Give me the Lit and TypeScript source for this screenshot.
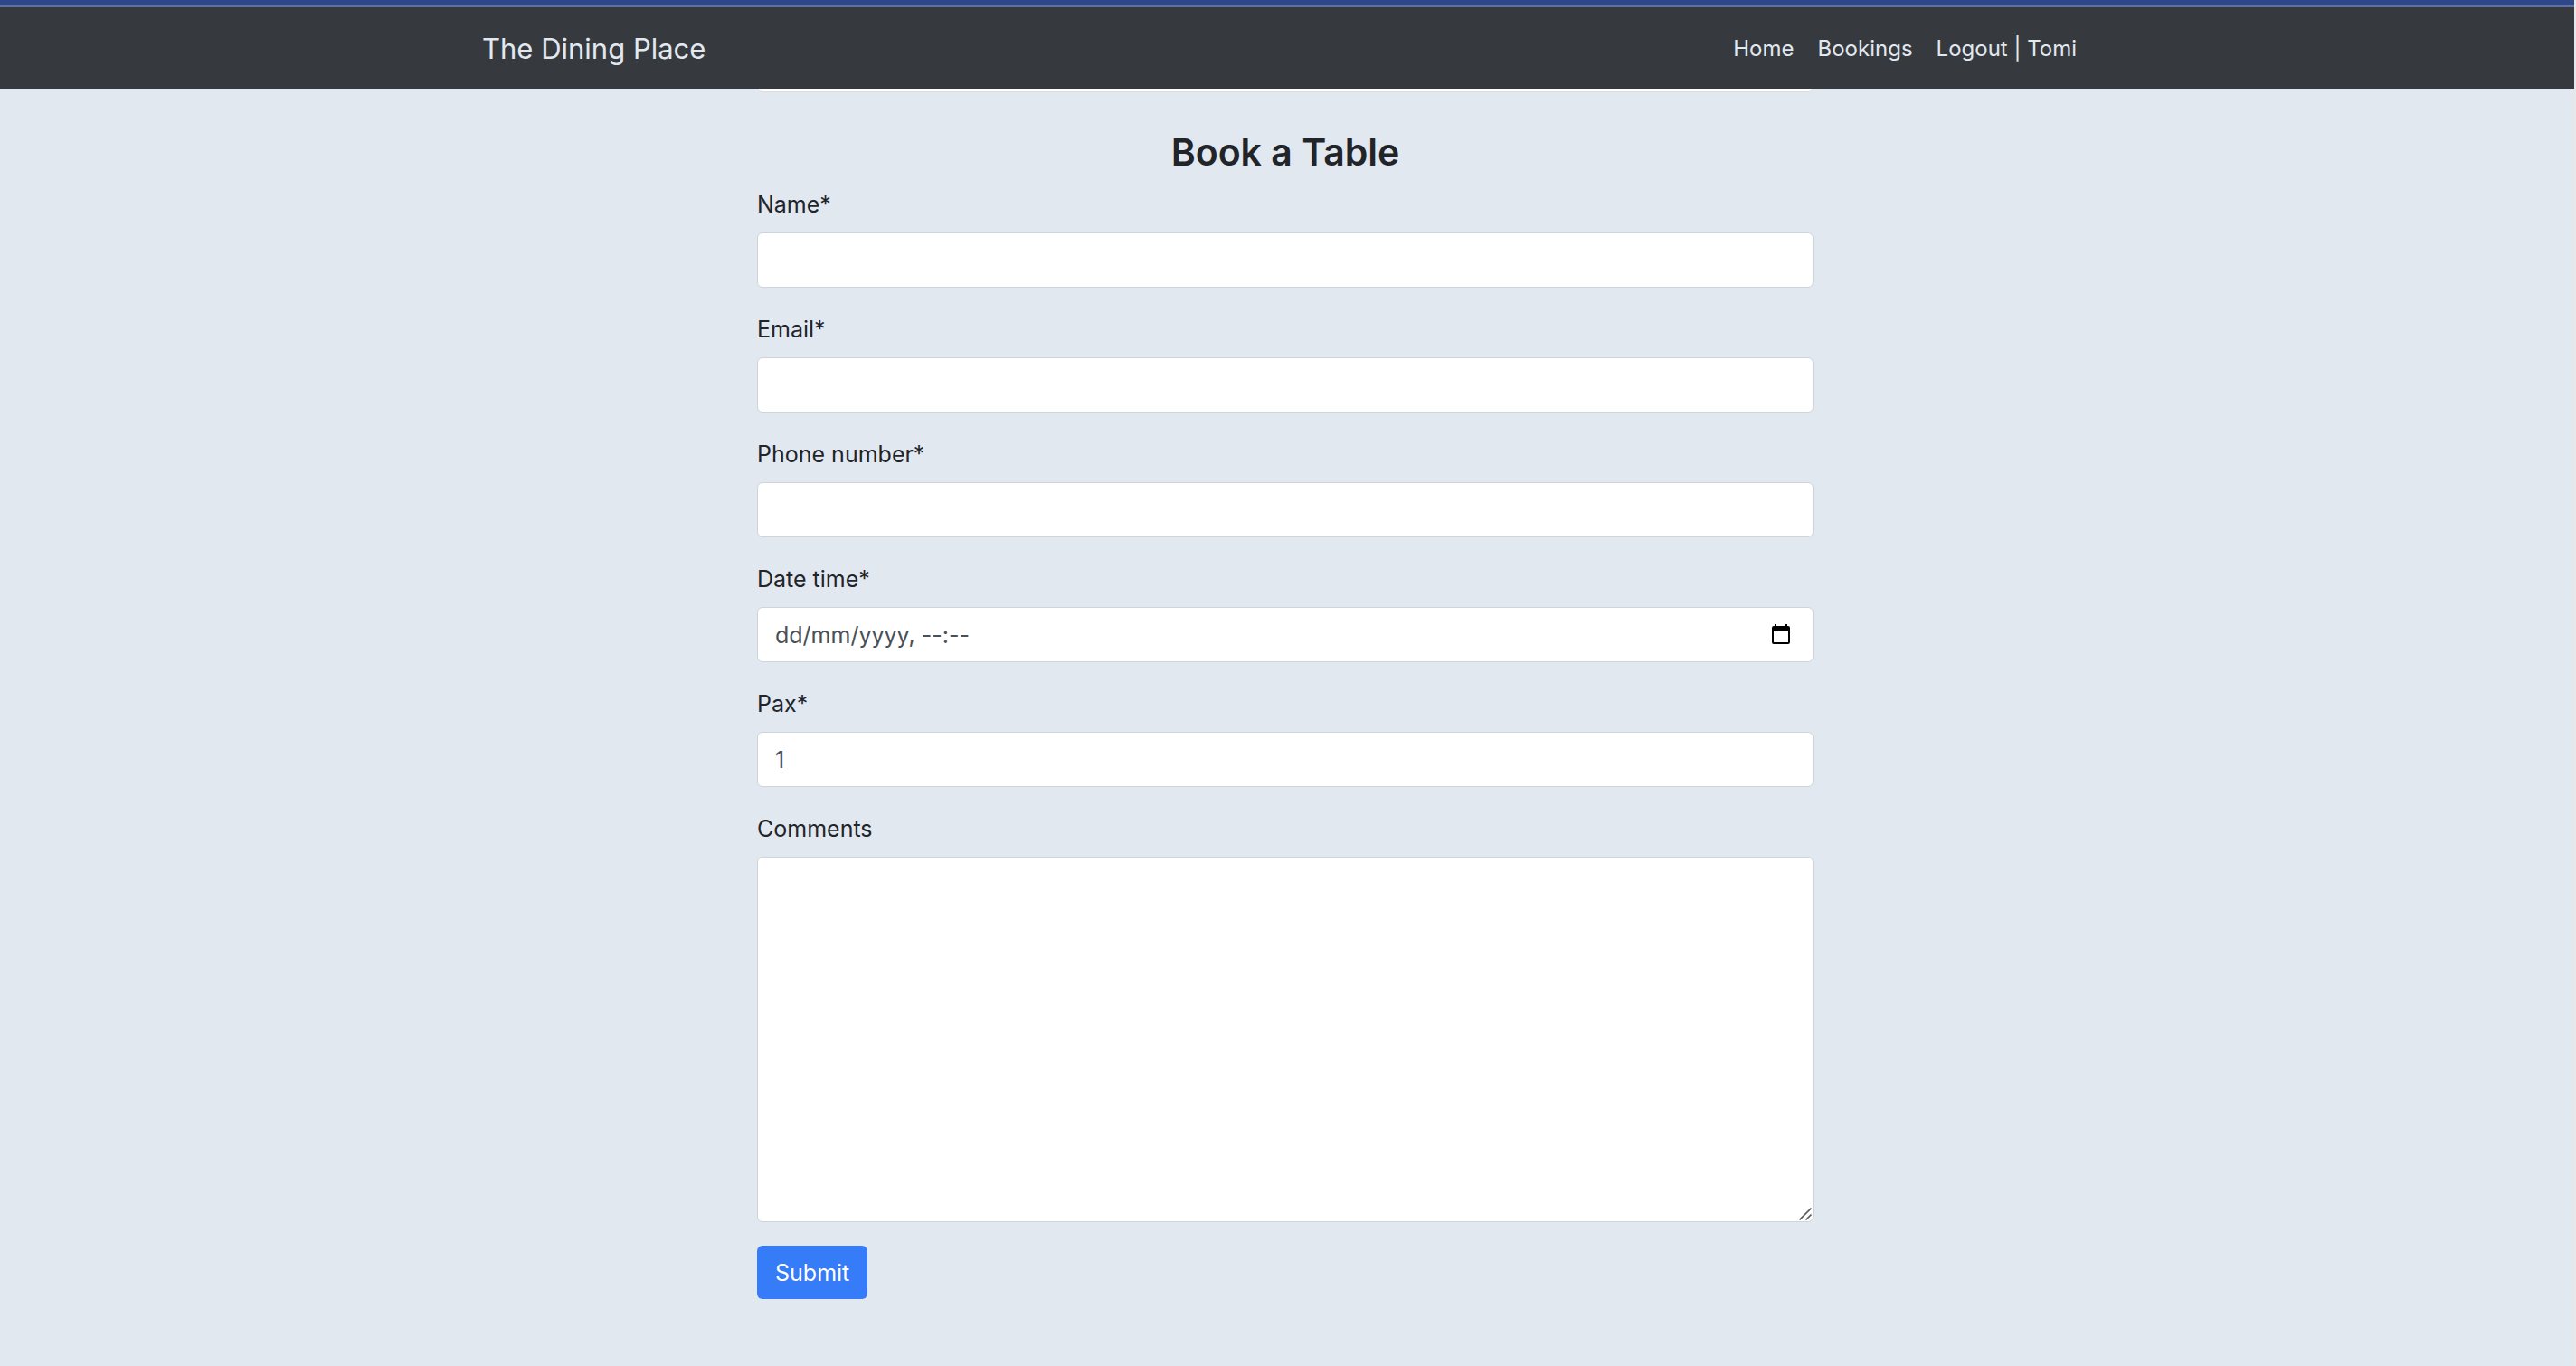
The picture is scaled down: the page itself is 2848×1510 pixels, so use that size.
import { LitElement, html, css } from "lit";
import { customElement, property } from "lit/decorators.js";

@customElement("site-header")
class SiteHeader extends LitElement {
  static styles = css`
    :host {
      display: block;
      position: sticky;
      top: 0;
      z-index: 1;
      border-top: 6px solid #2d4788;
    }
    .bar {
      border-top: 2px solid #6070a1;
      background: #363a3e;
      padding-right: 4px;
    }
    .inner {
      display: flex;
      align-items: center;
      justify-content: space-between;
      box-sizing: border-box;
      max-width: 1824px;
      min-height: 90px;
      margin: 0 auto;
      padding: 2px 24px 0;
    }
    a {
      color: #e1e8f0;
      text-decoration: none;
    }
    .brand {
      font-size: 31px;
      line-height: 48px;
    }
    .links {
      display: flex;
      margin: 0;
      padding: 0;
      list-style: none;
      font-size: 24px;
    }
    .link {
      display: block;
      padding: 13px;
    }
  `;

  render() {
    return html`
      <header class="bar">
        <div class="inner">
          <a class="brand" href="#">The Dining Place</a>
          <nav>
            <ul class="links">
              <li><a class="link" href="#home">Home</a></li>
              <li><a class="link" href="#bookings">Bookings</a></li>
              <li><a class="link" href="#logout">Logout | Tomi</a></li>
            </ul>
          </nav>
        </div>
      </header>
    `;
  }
}

@customElement("booking-form")
class BookingForm extends LitElement {
  @property() heading = "Book a Table";

  static styles = css`
    :host {
      display: block;
      color: #212529;
    }
    .title {
      margin: 0 0 10px;
      font-size: 41px;
      font-weight: 600;
      line-height: 56px;
      text-align: center;
    }
    .field {
      margin-bottom: 26px;
    }
    .label {
      display: block;
      margin-bottom: 11px;
      line-height: 40px;
    }
    .control {
      display: block;
      box-sizing: border-box;
      width: 100%;
      min-height: 61px;
      margin: 0;
      padding: 0 19px;
      border: 1px solid #ced4da;
      border-radius: 6px;
      background: #fff;
      color: #495057;
      font: inherit;
      outline: none;
    }
    .control:focus,
    .control:focus-within {
      border-color: #80bdff;
    }
    .number::-webkit-inner-spin-button {
      display: none;
    }
    .date {
      display: flex;
      align-items: center;
      padding-right: 20px;
    }
    .date-text {
      flex: 1;
      min-width: 0;
      padding: 0;
      border: 0;
      background: none;
      color: inherit;
      font: inherit;
      outline: none;
    }
    .date-text::placeholder {
      color: inherit;
    }
    .picker {
      display: flex;
      padding: 4px 5px 6px;
      border: 0;
      background: none;
    }
    .area-wrap {
      position: relative;
    }
    .area {
      height: 404px;
      padding: 10px 19px;
      resize: vertical;
    }
    .area::-webkit-resizer {
      display: none;
    }
    .grip {
      position: absolute;
      right: 2px;
      bottom: 2px;
      pointer-events: none;
    }
    .submit {
      min-height: 59px;
      padding: 0 20px;
      border: 0;
      border-radius: 6px;
      background: #367bf7;
      color: #fff;
      font: inherit;
    }
  `;

  render() {
    return html`
      <form @submit=${(e: Event) => e.preventDefault()}>
        <h2 class="title">${this.heading}</h2>
        <div class="field">
          <label class="label" for="name">Name*</label>
          <input class="control" id="name" type="text" required />
        </div>
        <div class="field">
          <label class="label" for="email">Email*</label>
          <input class="control" id="email" type="email" required />
        </div>
        <div class="field">
          <label class="label" for="phone">Phone number*</label>
          <input class="control" id="phone" type="tel" required />
        </div>
        <div class="field">
          <label class="label" for="date">Date time*</label>
          <div class="control date">
            <input class="date-text" id="date" type="text" placeholder="dd/mm/yyyy, --:--" required />
            <button class="picker" type="button" aria-label="Open calendar">
              <svg width="20" height="22" viewBox="0 0 20 22" aria-hidden="true">
                <path
                  fill-rule="evenodd"
                  d="M3 0h2v2h10V0h2v2h1a2 2 0 0 1 2 2v16a2 2 0 0 1-2 2H2a2 2 0 0 1-2-2V4a2 2 0 0 1 2-2h1zM2 7v13h16V7z"
                />
              </svg>
            </button>
          </div>
        </div>
        <div class="field">
          <label class="label" for="pax">Pax*</label>
          <input class="control number" id="pax" type="number" min="1" value="1" required />
        </div>
        <div class="field">
          <label class="label" for="comments">Comments</label>
          <div class="area-wrap">
            <textarea class="control area" id="comments"></textarea>
            <svg class="grip" width="14" height="14" viewBox="0 0 14 14" aria-hidden="true">
              <path d="M.5 13.5l13-13M7.5 13.5l6-6" fill="none" stroke="#5c5c5c" stroke-width="1.6" />
            </svg>
          </div>
        </div>
        <button class="submit" type="submit">Submit</button>
      </form>
    `;
  }
}

@customElement("app-root")
class AppRoot extends LitElement {
  static styles = css`
    :host {
      display: block;
      box-sizing: border-box;
      min-height: 100vh;
      border-right: 2px solid #e6e8ea;
      background: #e1e8f0;
      font: 25px/38px Inter, "Liberation Sans", sans-serif;
    }
    .content {
      padding: 0 4px 72px 0;
    }
    .column {
      max-width: 1168px;
      margin: 0 auto;
    }
    .card {
      box-sizing: border-box;
      height: 24px;
      margin: -20px 0 38px;
      border: 1px solid #dadddf;
      border-radius: 6px;
      background: #fff;
    }
  `;

  render() {
    return html`
      <site-header></site-header>
      <main class="content">
        <div class="column">
          <div class="card"></div>
          <booking-form></booking-form>
        </div>
      </main>
    `;
  }
}
